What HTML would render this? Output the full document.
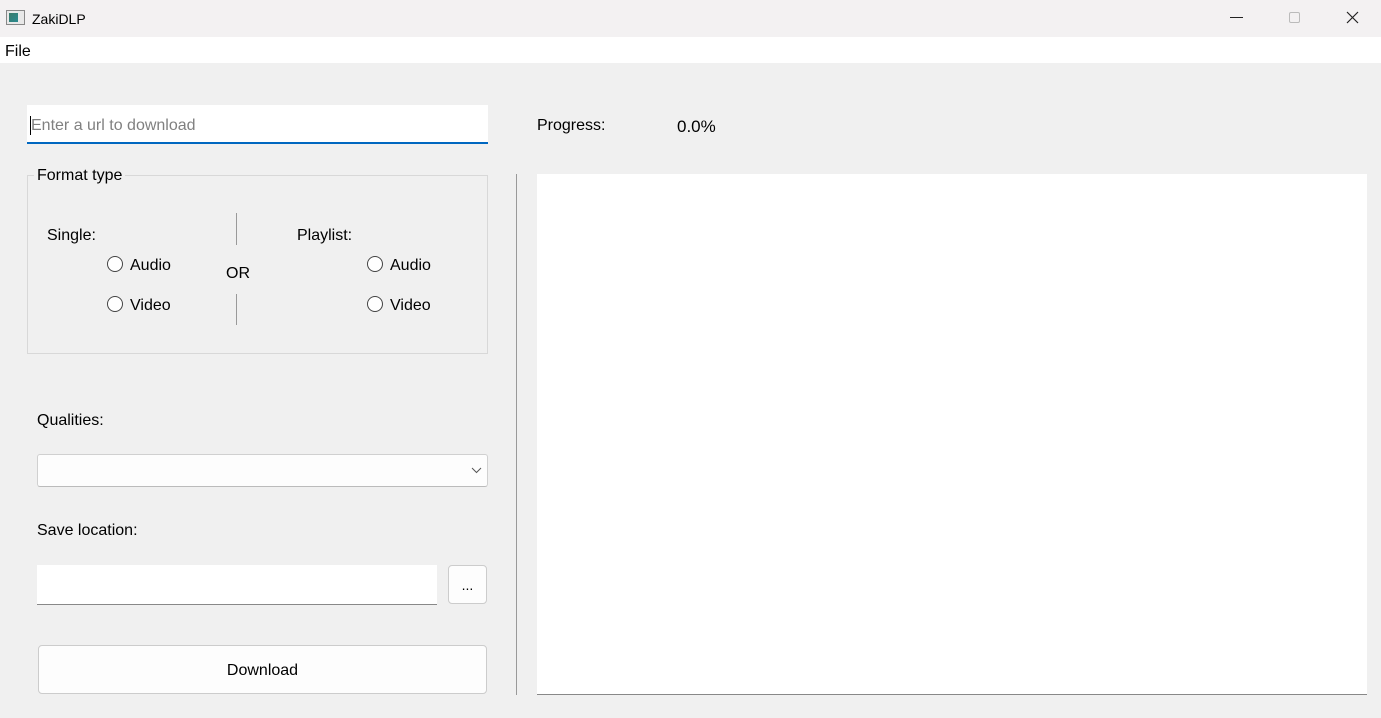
<!DOCTYPE html>
<html><head><meta charset="utf-8"><style>
*{margin:0;padding:0;box-sizing:border-box}
body{width:1381px;height:718px;background:#f0f0f0;font-family:"Liberation Sans",sans-serif;font-size:16px;color:#000;position:relative;overflow:hidden}
.a{position:absolute}
.t{font-size:16px;white-space:nowrap}
.radio{position:absolute;width:16px;height:16px;border:1px solid #444;border-radius:50%;background:#fff}
</style></head><body>
<div class="a" style="left:0;top:0;width:1381px;height:37px;background:#f3f1f2"></div>
<div class="a" style="left:6px;top:10px;width:19px;height:15px;border:1px solid #888;background:#e8e8e8"><div style="position:absolute;left:2px;top:2px;width:9px;height:9px;background:linear-gradient(135deg,#3a7a6a,#2a8a90)"></div></div>
<div class="a t" style="left:32px;top:11px;font-size:14px">ZakiDLP</div>
<div class="a" style="left:1230px;top:17px;width:13px;height:1px;background:#222"></div>
<div class="a" style="left:1289px;top:12px;width:11px;height:11px;border:1px solid #bbb;border-radius:2px"></div>
<svg class="a" style="left:1346px;top:11px" width="13" height="13"><path d="M1 1L12 12M12 1L1 12" stroke="#222" stroke-width="1.2"/></svg>
<div class="a" style="left:0;top:37px;width:1381px;height:26px;background:#fff"></div>
<div class="a t" style="left:5px;top:43px">File</div>

<div class="a" style="left:27px;top:105px;width:461px;height:39px;background:#fff;border-bottom:2px solid #0067c0"></div>
<div class="a" style="left:30px;top:116px;width:1px;height:19px;background:#000"></div>
<div class="a t" style="left:31px;top:117px;color:#808080">Enter a url to download</div>

<div class="a" style="left:27px;top:175px;width:461px;height:179px;border:1px solid #d8d8d8"></div>
<div class="a t" style="left:34px;top:167px;background:#f0f0f0;padding:0 3px">Format type</div>
<div class="a t" style="left:47px;top:227px">Single:</div>
<div class="a t" style="left:297px;top:227px">Playlist:</div>
<div class="a t" style="left:226px;top:265px">OR</div>
<div class="a" style="left:236px;top:213px;width:1px;height:32px;background:#999"></div>
<div class="a" style="left:236px;top:294px;width:1px;height:31px;background:#999"></div>
<div class="radio" style="left:107px;top:256px"></div><div class="a t" style="left:130px;top:257px">Audio</div>
<div class="radio" style="left:107px;top:296px"></div><div class="a t" style="left:130px;top:297px">Video</div>
<div class="radio" style="left:367px;top:256px"></div><div class="a t" style="left:390px;top:257px">Audio</div>
<div class="radio" style="left:367px;top:296px"></div><div class="a t" style="left:390px;top:297px">Video</div>

<div class="a t" style="left:37px;top:412px">Qualities:</div>
<div class="a" style="left:37px;top:454px;width:451px;height:33px;background:#fdfdfd;border:1px solid #d0d0d0;border-bottom-color:#bbb;border-radius:3px"></div>
<svg class="a" style="left:471px;top:467px" width="11" height="7"><path d="M1 1L5.5 5.5L10 1" stroke="#555" fill="none"/></svg>

<div class="a t" style="left:37px;top:522px">Save location:</div>
<div class="a" style="left:37px;top:565px;width:400px;height:40px;background:#fff;border-bottom:1px solid #888"></div>
<div class="a" style="left:448px;top:565px;width:39px;height:39px;background:#fdfdfd;border:1px solid #ccc;border-radius:4px;text-align:center;line-height:38px;font-size:14px">...</div>

<div class="a" style="left:38px;top:645px;width:449px;height:49px;background:#fdfdfd;border:1px solid #ccc;border-radius:4px;text-align:center;line-height:49px">Download</div>

<div class="a" style="left:516px;top:174px;width:1px;height:521px;background:#999"></div>
<div class="a t" style="left:537px;top:117px">Progress:</div>
<div class="a t" style="left:677px;top:117px;font-size:17px">0.0%</div>
<div class="a" style="left:537px;top:174px;width:830px;height:521px;background:#fff;border-bottom:1px solid #888"></div>
</body></html>
